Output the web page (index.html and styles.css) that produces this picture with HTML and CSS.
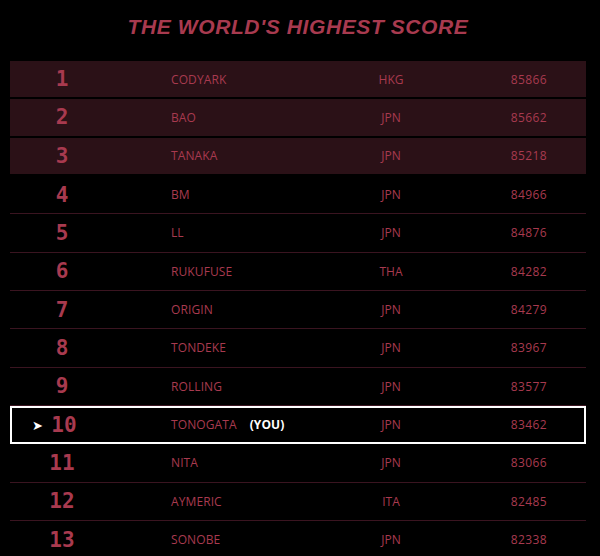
FILE: index.html
```html
<!DOCTYPE html>
<html>
<head>
<meta charset="utf-8">
<link rel="stylesheet" href="styles.css">
</head>
<body>
<div class="board">
  <h1 class="title">THE WORLD'S HIGHEST SCORE</h1>
  <ol class="list">
    <li class="row top"><span class="rank">1</span><span class="name">CODYARK</span><span class="country">HKG</span><span class="score">85866</span></li>
    <li class="row top"><span class="rank">2</span><span class="name">BAO</span><span class="country">JPN</span><span class="score">85662</span></li>
    <li class="row top"><span class="rank">3</span><span class="name">TANAKA</span><span class="country">JPN</span><span class="score">85218</span></li>
    <li class="row"><span class="rank">4</span><span class="name">BM</span><span class="country">JPN</span><span class="score">84966</span></li>
    <li class="row"><span class="rank">5</span><span class="name">LL</span><span class="country">JPN</span><span class="score">84876</span></li>
    <li class="row"><span class="rank">6</span><span class="name">RUKUFUSE</span><span class="country">THA</span><span class="score">84282</span></li>
    <li class="row"><span class="rank">7</span><span class="name">ORIGIN</span><span class="country">JPN</span><span class="score">84279</span></li>
    <li class="row"><span class="rank">8</span><span class="name">TONDEKE</span><span class="country">JPN</span><span class="score">83967</span></li>
    <li class="row"><span class="rank">9</span><span class="name">ROLLING</span><span class="country">JPN</span><span class="score">83577</span></li>
    <li class="row me"><span class="rank"><span class="arrow">&#10148;</span>10</span><span class="name">TONOGATA<span class="you">(YOU)</span></span><span class="country">JPN</span><span class="score">83462</span></li>
    <li class="row"><span class="rank">11</span><span class="name">NITA</span><span class="country">JPN</span><span class="score">83066</span></li>
    <li class="row"><span class="rank">12</span><span class="name">AYMERIC</span><span class="country">ITA</span><span class="score">82485</span></li>
    <li class="row"><span class="rank">13</span><span class="name">SONOBE</span><span class="country">JPN</span><span class="score">82338</span></li>
  </ol>
</div>
</body>
</html>
```
FILE: styles.css
```css
html, body {
  margin: 0;
  padding: 0;
  background: #000;
}
.board {
  width: 600px;
  height: 556px;
  overflow: hidden;
  padding: 0 14px 0 10px;
  box-sizing: border-box;
}
.title {
  margin: 0;
  height: 61px;
  box-sizing: border-box;
  padding-top: 14px;
  text-align: center;
  font-family: "Liberation Sans", sans-serif;
  font-style: italic;
  font-weight: bold;
  font-size: 21px;
  letter-spacing: 0.6px;
  color: #a83a4f;
  line-height: 26px;
}
.list {
  list-style: none;
  margin: 0;
  padding: 0;
}
.row {
  display: grid;
  grid-template-columns: 104px 57px 170px 100px 106px;
  align-items: center;
  height: 38.33px;
  box-sizing: border-box;
  border-bottom: 1px solid #3a1420;
  color: #a83a4f;
  font-family: "Open Sans", sans-serif;
  font-weight: 500;
  font-size: 12px;
}
.row.top {
  background: #2b1117;
  border-bottom: 2px solid #000;
}
.row.me {
  outline: 2px solid #fff;
  outline-offset: -2px;
}
.rank {
  grid-column: 1;
  position: relative;
  text-align: center;
  font-family: "DejaVu Sans Mono", monospace;
  font-weight: bold;
  font-size: 21px;
  letter-spacing: 0;
}
.me .rank {
  padding-left: 4px;
}
.arrow {
  position: absolute;
  left: 22px;
  top: 50%;
  transform: translateY(-50%);
  color: #fff;
  font-family: "DejaVu Sans", sans-serif;
  font-size: 13px;
  font-weight: normal;
}
.name {
  grid-column: 3;
  letter-spacing: 0.1px;
}
.you {
  color: #fff;
  font-weight: bold;
  margin-left: 13px;
}
.country {
  grid-column: 4;
  text-align: center;
}
.score {
  grid-column: 5;
  text-align: right;
  letter-spacing: 0.4px;
}
```
